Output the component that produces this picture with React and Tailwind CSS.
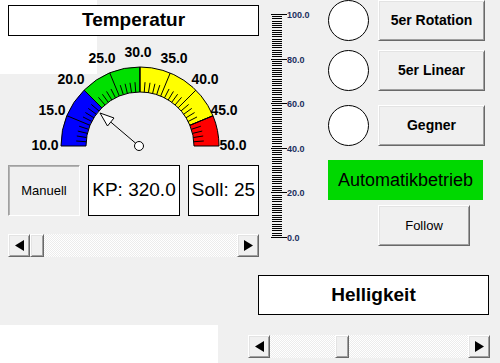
import React from "react";

const CX = 140;
const CY = 110;
const R = 79;
const RI = 54;

const pt = (v, r) => {
	const a = Math.PI * (1 - (v - 10) / 40);
	return [CX + r * Math.cos(a), CY - r * Math.sin(a)];
};

const segment = (v1, v2) => {
	const [ax, ay] = pt(v1, R);
	const [bx, by] = pt(v2, R);
	const [cx, cy] = pt(v2, RI);
	const [dx, dy] = pt(v1, RI);
	return `M${ax} ${ay} A${R} ${R} 0 0 1 ${bx} ${by} L${cx} ${cy} A${RI} ${RI} 0 0 0 ${dx} ${dy} Z`;
};

const bands = [
	{ from: 10, to: 20, color: "#0000ff" },
	{ from: 20, to: 30, color: "#00e000" },
	{ from: 30, to: 45, color: "#ffff00" },
	{ from: 45, to: 50, color: "#ff0000" },
];

const labels = [
	{ t: "10.0", x: 45, y: 145 },
	{ t: "15.0", x: 52, y: 110 },
	{ t: "20.0", x: 71, y: 79 },
	{ t: "25.0", x: 102, y: 58 },
	{ t: "30.0", x: 138, y: 52 },
	{ t: "35.0", x: 174, y: 58 },
	{ t: "40.0", x: 205, y: 79 },
	{ t: "45.0", x: 224, y: 110 },
	{ t: "50.0", x: 233, y: 145 },
];

function Gauge() {
	const ticks = [];
	for (let v = 11; v < 50; v++) {
		const major = v % 5 === 0;
		const [x1, y1] = pt(v, RI);
		const [x2, y2] = pt(v, major ? R : 64);
		ticks.push(<line key={v} x1={x1} y1={y1} x2={x2} y2={y2} stroke="#000" strokeWidth="1" />);
	}
	return (
		<svg width="260" height="125" className="block -ml-[8px]">
			{bands.map((b) => (
				<path key={b.from} d={segment(b.from, b.to)} fill={b.color} stroke="#000" strokeWidth="1" />
			))}
			{ticks}
			{labels.map((l) => (
				<text
					key={l.t}
					x={l.x}
					y={l.y - 36}
					textAnchor="middle"
					dominantBaseline="central"
					fontSize="14"
					fontWeight="bold"
					fontFamily="Liberation Sans, Arial, sans-serif"
					fill="#000"
				>
					{l.t}
				</text>
			))}
			<line x1="110.7" y1="86" x2="136" y2="107.5" stroke="#000" strokeWidth="1" />
			<polygon points="100,77 114,82 107.5,90" fill="#fff" stroke="#000" strokeWidth="1" />
			<circle cx="139" cy="110" r="4.5" fill="#fff" stroke="#000" strokeWidth="1" />
		</svg>
	);
}

function Scale() {
	const lines = [];
	for (let v = 0; v <= 100; v++) {
		const y = Math.round(14 + (100 - v) * 2.23) + 0.5;
		const major = v % 20 === 0;
		lines.push(
			<line key={v} x1={major ? 11 : 12} x2={major ? 27 : 22} y1={y} y2={y} stroke="#000" strokeWidth="1" shapeRendering="crispEdges" />
		);
		if (major) {
			lines.push(
				<text
					key={"t" + v}
					x="27"
					y={y}
					dominantBaseline="central"
					fontSize="9"
					fontWeight="bold"
					fontFamily="Liberation Sans, Arial, sans-serif"
					fill="#1c2f5e"
				>
					{v.toFixed(1)}
				</text>
			);
		}
	}
	return (
		<svg width="68" height="245" className="block shrink-0">
			{lines}
		</svg>
	);
}

const raised =
	"border border-t-white border-l-white border-r-[#696969] border-b-[#696969] shadow-[inset_1px_1px_0_#e3e3e3,inset_-1px_-1px_0_#a0a0a0] bg-[#f0f0f0]";

function Arrow({ dir }) {
	return (
		<div className={`w-[22px] h-full flex items-center justify-center shrink-0 ${raised}`}>
			<svg width="9" height="11" viewBox="0 0 9 11">
				{dir === "left" ? <polygon points="9,0 9,11 0,5.5" fill="#000" /> : <polygon points="0,0 0,11 9,5.5" fill="#000" />}
			</svg>
		</div>
	);
}

function ScrollBar({ offset, className }) {
	return (
		<div className={`flex h-[23px] ${className}`}>
			<Arrow dir="left" />
			<div className="flex-1 flex bg-[image:repeating-conic-gradient(#ffffff_0_25%,#ececec_0_50%)] bg-[length:2px_2px]">
				<div style={{ width: offset }} className="shrink-0" />
				<div className={`w-[14px] h-full shrink-0 ${raised}`} />
			</div>
			<Arrow dir="right" />
		</div>
	);
}

function Circle() {
	return <div className="w-[41px] h-[41px] rounded-full border border-black bg-white shrink-0" />;
}

function BoldButton({ children }) {
	return (
		<div className={`w-[107px] h-[41px] ml-[9px] flex items-center justify-center font-bold text-[14px] text-black ${raised}`}>
			{children}
		</div>
	);
}

export default function App() {
	return (
		<div className="relative w-[500px] h-[363px] bg-[#f0f0f0] overflow-hidden font-['Liberation_Sans',Arial,sans-serif] text-black">
			{/* white patches behind the form */}
			<div className="absolute left-0 top-0 w-[97px] h-[74px] bg-white" />
			<div className="absolute left-0 top-[325px] w-[218px] h-[38px] bg-white" />

			<div className="relative flex h-[257px]">
				{/* left column */}
				<div className="w-[260px] shrink-0 pl-[8px] pt-[5px]">
					<div className="w-[251px] h-[31px] border border-black bg-white flex items-center justify-center font-bold text-[19px]">
						Temperatur
					</div>
					<Gauge />
					<div className="flex gap-[8px] mt-[4px]">
						<div className="w-[72px] h-[51px] flex items-center justify-center text-[13px] bg-[#f0f0f0] border border-t-[#a0a0a0] border-l-[#a0a0a0] border-r-white border-b-white shadow-[inset_1px_1px_0_#b4b4b4]">
							Manuell
						</div>
						<div className="w-[92px] h-[51px] border border-black bg-white flex items-center justify-center text-[19px]">
							KP: 320.0
						</div>
						<div className="w-[71px] h-[51px] border border-black bg-white flex items-center justify-center text-[19px]">
							Soll: 25
						</div>
					</div>
					<ScrollBar offset={0} className="w-[251px] mt-[18px]" />
				</div>

				{/* vertical scale */}
				<Scale />

				{/* circles and buttons */}
				<div className="flex flex-col">
					<div className="flex">
						<Circle />
						<BoldButton>5er Rotation</BoldButton>
					</div>
					<div className="flex mt-[9px]">
						<Circle />
						<BoldButton>5er Linear</BoldButton>
					</div>
					<div className="flex mt-[14px]">
						<Circle />
						<BoldButton>Gegner</BoldButton>
					</div>
					<div className="w-[155px] h-[40px] mt-[14px] bg-[#00d800] flex items-center justify-center text-[18px]">
						Automatikbetrieb
					</div>
					<div className={`w-[92px] h-[41px] mt-[5px] ml-[50px] flex items-center justify-center text-[13px] ${raised}`}>
						Follow
					</div>
				</div>
			</div>

			{/* bottom right */}
			<div className="relative w-[231px] h-[40px] ml-[258px] mt-[18px] border border-black bg-white flex items-center justify-center font-bold text-[19px]">
				Helligkeit
			</div>
			<ScrollBar offset={65} className="relative w-[242px] ml-[248px] mt-[20px]" />
		</div>
	);
}
